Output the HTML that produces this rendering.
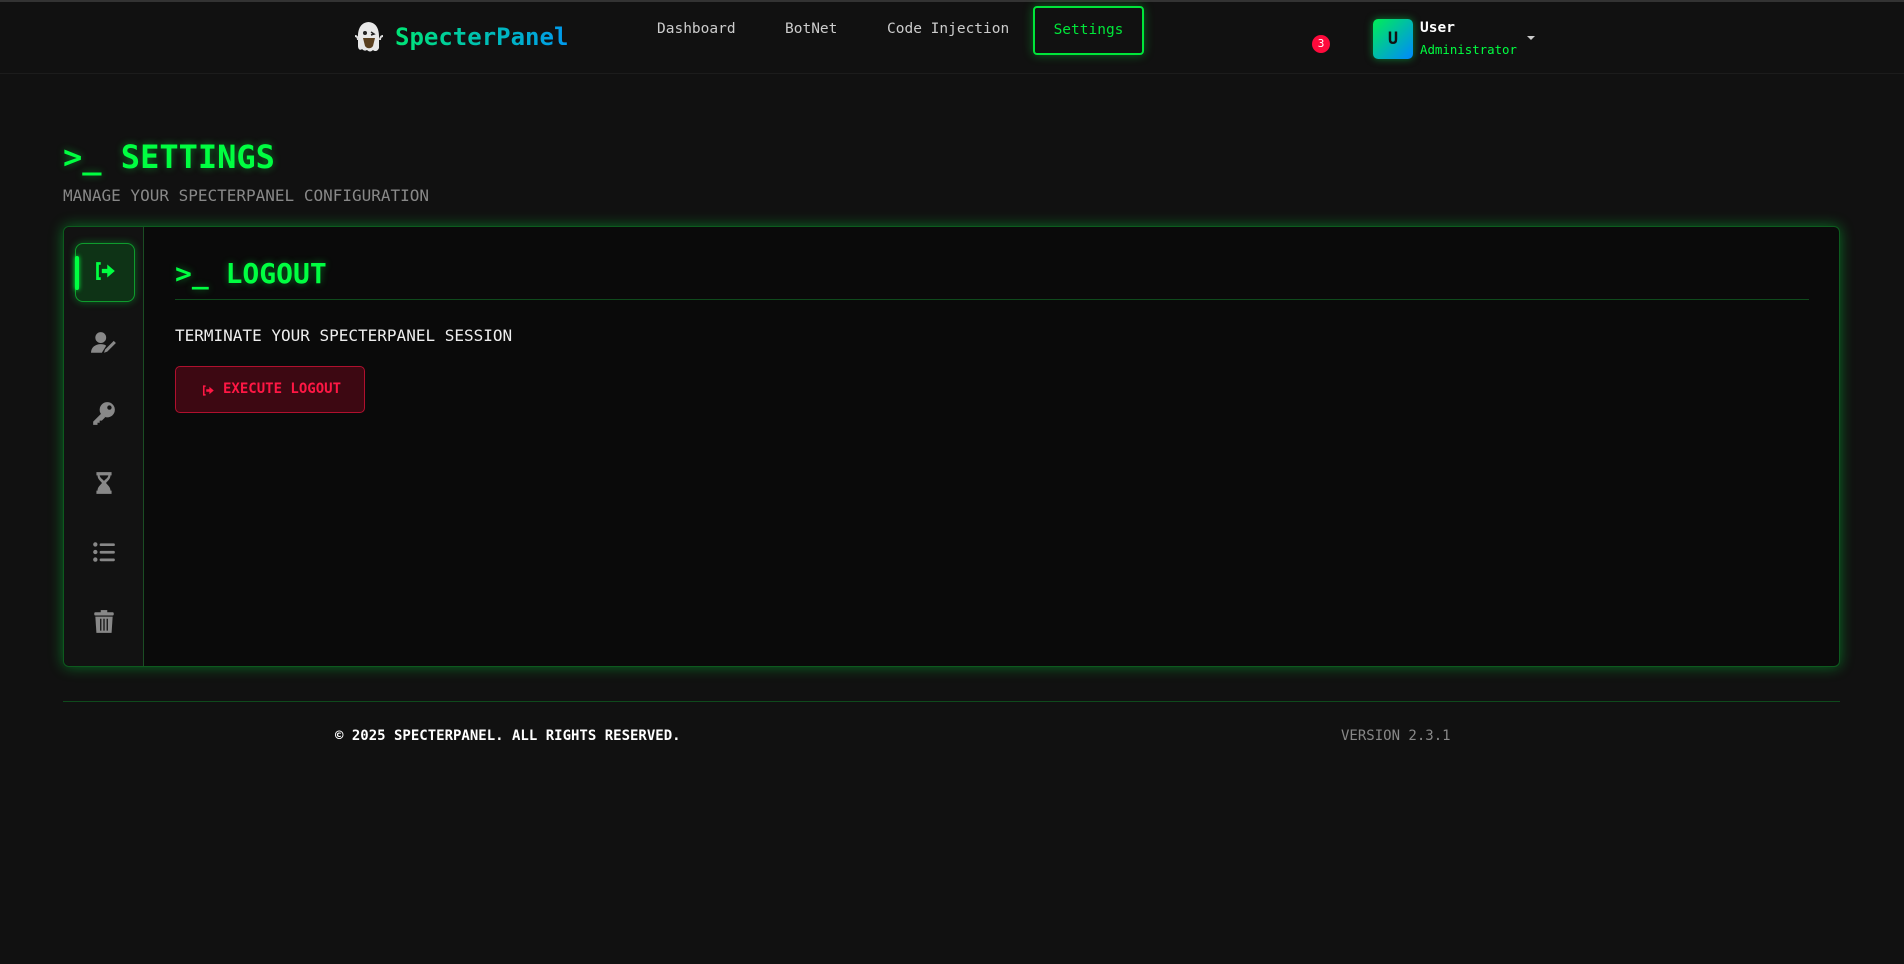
<!DOCTYPE html>
<html><head><meta charset="utf-8"><style>
*{box-sizing:border-box;margin:0;padding:0}
body{width:1904px;height:964px;background:#111111;font-family:"DejaVu Sans Mono","Liberation Mono",monospace;color:#ddd;position:relative;overflow:hidden;border-top:2px solid #333}
.hdr{position:absolute;left:0;top:0;width:1904px;height:72px;background:#111;border-bottom:1px solid #1c1c1c}
.logo{position:absolute;left:350px;top:18px;font-size:24px;font-weight:bold}
.logo .t{position:absolute;left:45px;top:3px;background:linear-gradient(90deg,#00e676,#0099ee);-webkit-background-clip:text;color:transparent;white-space:nowrap}
.nav{position:absolute;top:19px;font-size:14.5px;color:#ccc}
.set{position:absolute;left:1033px;top:4px;width:111px;height:49px;border:2px solid #00e63a;border-radius:4px;color:#00e63a;font-size:14.5px;line-height:45px;text-align:center;box-shadow:0 0 10px rgba(0,230,58,.4)}
.badge{position:absolute;left:1312px;top:33px;width:18px;height:18px;border-radius:50%;background:#ff0a3c;color:#fff;font-size:11px;text-align:center;line-height:18px}
.av{position:absolute;left:1373px;top:17px;width:40px;height:40px;border-radius:5px;background:linear-gradient(135deg,#00ee55,#0088ff);color:#111;font-weight:bold;font-size:17px;text-align:center;line-height:40px;box-shadow:0 0 8px rgba(0,230,80,.5)}
.h1{position:absolute;left:63px;top:136px;font-size:32px;font-weight:bold;color:#00ff41;text-shadow:0 0 8px rgba(0,255,65,.4)}
.sub{position:absolute;left:63px;top:184px;font-size:16px;color:#888}
.card{position:absolute;left:63px;top:224px;width:1777px;height:441px;background:#0a0a0a;border:1px solid #0d5a1e;border-radius:6px;box-shadow:0 0 14px rgba(0,220,60,.45)}
.side{position:absolute;left:0;top:0;width:80px;height:100%;background:#121212;border-right:1px solid #1b4d24;border-radius:6px 0 0 6px}
.act{position:absolute;left:11px;top:16px;width:60px;height:59px;border:1px solid #0f9b2d;border-radius:8px;background:#0e3316;box-shadow:0 0 8px rgba(0,230,60,.4)}
.act:before{content:"";position:absolute;left:-1px;top:12px;width:4px;height:34px;background:#00ff41;border-radius:2px;box-shadow:0 0 5px #00ff41}
.ic{position:absolute;left:27px;width:26px;height:26px}
.h2{position:absolute;left:111px;top:30px;font-size:28px;font-weight:bold;color:#00ff41;text-shadow:0 0 8px rgba(0,255,65,.4)}
.line{position:absolute;left:111px;top:72px;width:1634px;height:1px;background:#0f4a1c}
.p{position:absolute;left:111px;top:99px;font-size:16px;color:#eee}
.btn{position:absolute;left:111px;top:139px;width:190px;height:47px;border:1px solid #b0102e;border-radius:5px;background:#3d0812;color:#ff1744;font-weight:bold;font-size:14px;line-height:45px;padding-left:47px}
.foot{position:absolute;left:63px;top:699px;width:1777px;height:1px;background:#0f4a1c}
</style></head><body>
<div class="hdr">
 <div class="logo"><svg width="34" height="34" viewBox="0 0 34 34" style="position:absolute;left:2px;top:0"><path d="M17 2C9 2 6 9 6 16v10c0 3 2 5 4 3 2 2 3 2 5 1 2 2 4 2 6 0 2 2 5 1 6-2V16c0-7-3-14-11-14z" fill="#e8e8e8"/><path d="M3 16c2 0 3 2 3 4M31 16c-2 0-3 2-3 4" stroke="#ddd" stroke-width="2" fill="none"/><circle cx="13" cy="13" r="2" fill="#222"/><path d="M19 12l3 2-3 1" stroke="#222" stroke-width="1.5" fill="none"/><path d="M11 18h12l-2 8c-2 3-6 3-8 0z" fill="#5a4020"/></svg><span class="t">SpecterPanel</span></div>
 <div class="nav" style="left:657px">Dashboard</div>
 <div class="nav" style="left:785px">BotNet</div>
 <div class="nav" style="left:887px">Code Injection</div>
 <div class="set">Settings</div>
 <div class="badge">3</div>
 <div class="av">U</div>
 <div style="position:absolute;left:1420px;top:18px;font-size:14.5px;font-weight:bold;color:#fff">User</div>
 <div style="position:absolute;left:1420px;top:40px;font-size:12.4px;color:#00ff41">Administrator</div>
 <div style="position:absolute;left:1527px;top:34px;border:4px solid transparent;border-top:4px solid #ccc"></div>
</div>
<div class="h1">&gt;_ SETTINGS</div>
<div class="sub">MANAGE YOUR SPECTERPANEL CONFIGURATION</div>
<div class="card">
 <div class="side">
  <div class="act"></div>
  <svg class="ic" style="top:31px" viewBox="0 0 24 24"><path d="M9 5H6v14h3" stroke="#00ff41" stroke-width="2.5" fill="none"/><path d="M10 10h5V6l7 6-7 6v-4h-5z" fill="#00ff41"/></svg>
  <svg class="ic" style="top:103px" viewBox="0 0 24 24" fill="#888"><circle cx="9" cy="7" r="5"/><path d="M0 21c0-5 4-8 9-8 2 0 4 .5 5 1.5L10 21z"/><path d="M12 21l1-3 8-8 2 2-8 8z"/></svg>
  <svg class="ic" style="top:173px" viewBox="0 0 24 24" fill="#888"><circle cx="15" cy="9" r="7"/><path d="M10 12L2 20v3h4v-2h2v-2h2l3-3z"/><circle cx="17" cy="7" r="2" fill="#121212"/></svg>
  <svg class="ic" style="top:243px" viewBox="0 0 24 24" fill="#888"><path d="M5 2h14v3h-1c0 4-4 6-4 7s4 3 4 7h1v3H5v-3h1c0-4 4-6 4-7S6 9 6 5H5z"/><path d="M8 5h8c0 2-3 4-4 5-1-1-4-3-4-5z" fill="#121212"/></svg>
  <svg class="ic" style="top:312px" viewBox="0 0 24 24" fill="#888"><circle cx="4" cy="5" r="2"/><circle cx="4" cy="12" r="2"/><circle cx="4" cy="19" r="2"/><rect x="8" y="4" width="14" height="2.5" rx="1"/><rect x="8" y="11" width="14" height="2.5" rx="1"/><rect x="8" y="18" width="14" height="2.5" rx="1"/></svg>
  <svg class="ic" style="top:382px" viewBox="0 0 24 24" fill="#888"><rect x="3" y="3" width="18" height="3" rx="1"/><rect x="9" y="1" width="6" height="3"/><path d="M4 7h16l-1 15H5z"/><path d="M9 9v11M12 9v11M15 9v11" stroke="#121212" stroke-width="1.2"/></svg>
 </div>
 <div class="h2">&gt;_ LOGOUT</div>
 <div class="line"></div>
 <div class="p">TERMINATE YOUR SPECTERPANEL SESSION</div>
 <div class="btn"><svg style="position:absolute;left:24px;top:16px" width="15" height="15" viewBox="0 0 24 24"><path d="M9 5H6v14h3" stroke="#ff1744" stroke-width="2.5" fill="none"/><path d="M10 10h5V6l7 6-7 6v-4h-5z" fill="#ff1744"/></svg>EXECUTE LOGOUT</div>
</div>
<div class="foot"></div>
<div style="position:absolute;left:335px;top:726px;font-size:14px;font-weight:bold;color:#fff">© 2025 SPECTERPANEL. ALL RIGHTS RESERVED.</div>
<div style="position:absolute;left:1341px;top:726px;font-size:14px;color:#888">VERSION 2.3.1</div>
</body></html>
